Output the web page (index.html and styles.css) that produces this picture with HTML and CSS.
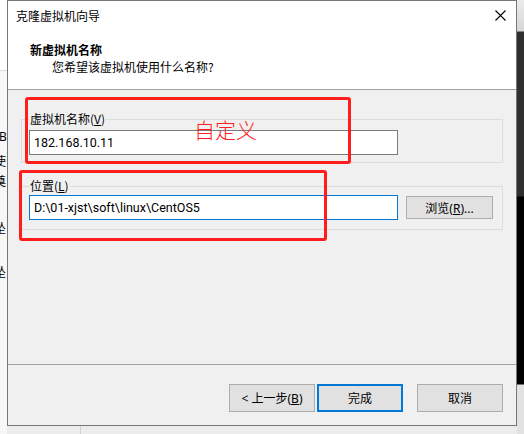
FILE: index.html
```html
<!DOCTYPE html>
<html lang="zh-CN">
<head>
<meta charset="utf-8">
<title>克隆虚拟机向导</title>
<link rel="stylesheet" href="styles.css">
</head>
<body>
<div class="desktop">
  <div class="side-left">
    <div class="sl-top"></div>
    <div class="frag f-b">B</div>
    <div class="frag f-shi">使</div>
    <div class="frag f-mo">奠</div>
    <div class="frag f-z1">坠</div>
    <div class="frag f-z2">坠</div>
  </div>
  <div class="center">
    <div class="dialog">
      <div class="head">
        <div class="titlebar">
          <span class="title">克隆虚拟机向导</span>
          <svg class="close" width="11" height="11" viewBox="0 0 11 11"><path d="M0.5 0.5 L10.5 10.5 M10.5 0.5 L0.5 10.5" stroke="#000" stroke-width="1.1" fill="none"/></svg>
        </div>
        <div class="hdr-title">新虚拟机名称</div>
        <div class="hdr-sub">您希望该虚拟机使用什么名称?</div>
      </div>
      <div class="body">
        <fieldset class="group g1">
          <legend>虚拟机名称(<u>V</u>)</legend>
          <div class="row">
            <div class="input">182.168.10.11</div>
          </div>
        </fieldset>
        <fieldset class="group g2">
          <legend>位置(<u>L</u>)</legend>
          <div class="row">
            <div class="input focus">D:\01-xjst\soft\linux\CentOS5</div>
            <button class="btn browse">浏览(<u>R</u>)...</button>
          </div>
        </fieldset>
      </div>
      <div class="foot">
        <button class="btn fbtn back">&lt; 上一步(<u>B</u>)</button>
        <button class="btn fbtn finish">完成</button>
        <button class="btn fbtn cancel">取消</button>
      </div>
    </div>
    <div class="below"><div class="vline"></div></div>
  </div>
  <div class="side-right"></div>

  <div class="anno anno1"></div>
  <div class="anno anno2"></div>
  <div class="anno-text">自定义</div>
</div>
</body>
</html>
```

FILE: styles.css
```css
* { box-sizing: border-box; }
html, body { margin: 0; padding: 0; }
body {
  width: 524px;
  height: 434px;
  overflow: hidden;
  font-family: "Noto Sans", "Noto Sans CJK SC", sans-serif;
  font-size: 12px;
  color: #000;
  background: #f0f0f0;
}
.desktop {
  position: relative;
  display: flex;
  width: 524px;
  height: 434px;
}

/* background window on the left */
.side-left {
  width: 7px;
  flex: none;
  overflow: hidden;
  background: #f7f7f7;
}
.sl-top {
  height: 71px;
  background: #fff;
  border-bottom: 1px solid #dadada;
}
.frag {
  height: 16px;
  line-height: 16px;
  white-space: nowrap;
  font-family: "Noto Sans CJK SC", sans-serif;
  font-size: 12px;
}
.f-b { margin-top: 58px; text-indent: -1px; font-family: "Noto Sans", sans-serif; }
.f-shi { margin-top: 8px; text-indent: -6px; }
.f-mo { margin-top: 4px; text-indent: -6px; }
.f-z1 { margin-top: 31px; text-indent: -6px; }
.f-z2 { margin-top: 28px; text-indent: -6px; }

.center {
  width: 510px;
  flex: none;
  display: flex;
  flex-direction: column;
}
.below {
  flex: 1;
  background: #ececec;
}
.vline {
  margin-left: 73px;
  width: 1px;
  height: 100%;
  background: #d2d2d2;
}
.side-right {
  width: 7px;
  flex: none;
  background: linear-gradient(to bottom,
    #ececec 0, #d6d6d6 31px,
    #2f2f2f 32px, #2f2f2f 196px,
    #000 197px, #000 384px,
    #e2e2e2 385px, #e2e2e2 100%);
}

/* dialog */
.dialog {
  height: 426px;
  border: 1px solid #777;
  background: #f0f0f0;
  display: flex;
  flex-direction: column;
}
.head {
  height: 89px;
  flex: none;
  background: #fff;
  border-bottom: 1px solid #a0a0a0;
}
.titlebar {
  height: 29px;
  display: flex;
  align-items: center;
  justify-content: space-between;
  padding: 0 10px 0 8px;
}
.title {
  font-family: "Noto Sans CJK SC", sans-serif;
  line-height: 16px;
}
.close { display: block; }
.hdr-title {
  margin-top: 12px;
  padding-left: 22px;
  line-height: 16px;
  font-weight: bold;
  font-family: "Noto Sans CJK SC", sans-serif;
}
.hdr-sub {
  margin-top: 1px;
  padding-left: 44px;
  line-height: 16px;
  font-family: "Noto Sans CJK SC", sans-serif;
}

.body {
  flex: 1;
  padding: 0 13px;
}
.group {
  margin: 0;
  border: 1px solid #dcdcdc;
  min-width: 0;
}
.group legend {
  padding: 0 1px;
  line-height: 16px;
  font-family: "Noto Sans CJK SC", sans-serif;
}
.g1 {
  margin-top: 21px;
  padding: 3px 8px 7px 7px;
}
.g2 {
  margin-top: 15px;
  padding: 1px 8px 9px 7px;
}
.row {
  display: flex;
  align-items: center;
  gap: 8px;
}
.input {
  width: 369px;
  height: 25px;
  flex: none;
  background: #fff;
  border: 1px solid #7a7a7a;
  padding: 0 4px;
  line-height: 23px;
  font-family: Roboto, "Noto Sans", sans-serif;
  font-size: 12.5px;
  white-space: nowrap;
  overflow: hidden;
}
.input.focus { border-color: #0078d7; }

.btn {
  margin: 0;
  padding: 0;
  background: #e1e1e1;
  border: 1px solid #adadad;
  border-radius: 0;
  font-family: "Noto Sans", "Noto Sans CJK SC", sans-serif;
  font-size: 12px;
  color: #000;
}
.browse {
  width: 87px;
  height: 23px;
  flex: none;
}

.foot {
  height: 61px;
  flex: none;
  border-top: 1px solid #a0a0a0;
  display: flex;
  justify-content: flex-end;
  align-items: flex-start;
  padding: 19px 13px 0 0;
}
.fbtn {
  width: 86px;
  height: 28px;
}
.back { margin-right: 2px; }
.finish {
  margin-right: 14px;
  border: 2px solid #0078d7;
}

/* red annotations drawn over the dialog */
.anno {
  position: absolute;
  border: 3px solid #ff1c1c;
  border-radius: 3px;
}
.anno1 { left: 25px; top: 97px; width: 326px; height: 67px; }
.anno2 { left: 19px; top: 170px; width: 308px; height: 71px; }
.anno-text {
  position: absolute;
  left: 194px;
  top: 117px;
  font-family: "Noto Sans CJK SC", sans-serif;
  font-weight: 300;
  font-size: 21px;
  line-height: 24px;
  color: #ff2020;
}
```
